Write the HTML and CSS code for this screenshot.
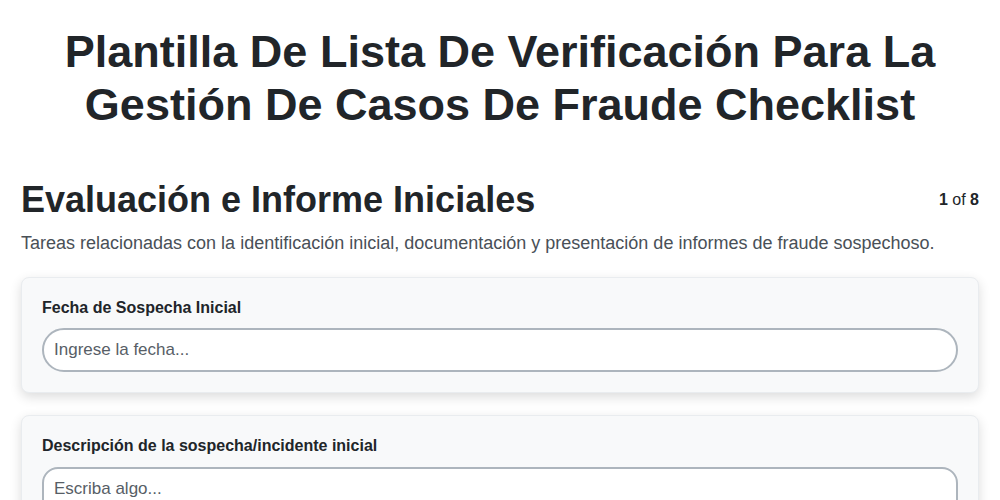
FILE: index.html
```html
<!DOCTYPE html>
<html lang="es">
<head>
<meta charset="utf-8">
<title>Plantilla De Lista De Verificación</title>
<link rel="stylesheet" href="styles.css">
</head>
<body>
<main class="page">
  <h1 class="title">Plantilla De Lista De Verificación Para La Gestión De Casos De Fraude Checklist</h1>
  <section class="section">
    <div class="section-head">
      <h2 class="section-title">Evaluación e Informe Iniciales</h2>
      <div class="pager"><b>1</b> of <b>8</b></div>
    </div>
    <p class="section-desc">Tareas relacionadas con la identificación inicial, documentación y presentación de informes de fraude sospechoso.</p>
    <div class="card">
      <label class="field-label" for="f1">Fecha de Sospecha Inicial</label>
      <input class="field-input" id="f1" type="text" placeholder="Ingrese la fecha...">
    </div>
    <div class="card">
      <label class="field-label" for="f2">Descripción de la sospecha/incidente inicial</label>
      <textarea class="field-area" id="f2" rows="4" placeholder="Escriba algo..."></textarea>
    </div>
  </section>
</main>
</body>
</html>
```
FILE: styles.css
```css
* { box-sizing: border-box; }
html, body { margin: 0; padding: 0; background: #ffffff; }
body {
  font-family: "Liberation Sans", Arial, sans-serif;
  color: #212529;
}
.page { padding: 0 21px; }
.title {
  margin: 25px 30px 0;
  font-size: 45px;
  line-height: 53px;
  font-weight: 700;
  text-align: center;
}
.section { margin-top: 47px; }
.section-head {
  display: flex;
  justify-content: space-between;
  align-items: center;
}
.section-title {
  margin: 0;
  font-size: 36px;
  line-height: 1.2;
  font-weight: 700;
}
.pager { font-size: 16px; line-height: 1.2; }
.pager b { font-weight: 700; }
.section-desc {
  margin: 9px 0 20px;
  font-size: 18px;
  line-height: 1.5;
  color: #495057;
}
.card {
  background: #f8f9fa;
  border: 1px solid #e9ecef;
  border-radius: 8px;
  padding: 20px;
  margin-bottom: 22px;
  box-shadow: 0 4px 12px rgba(0, 0, 0, 0.14);
  display: flex;
  flex-direction: column;
}
.field-label {
  font-size: 16px;
  line-height: 1.2;
  font-weight: 700;
  margin-bottom: 11px;
}
.field-input, .field-area {
  font-family: "Liberation Sans", Arial, sans-serif;
  font-size: 17px;
  line-height: 20px;
  color: #212529;
  background: #ffffff;
  border: 2px solid #adb5bd;
  padding: 10px;
  width: 100%;
  outline: none;
}
.field-input { border-radius: 22px; height: 44px; }
.field-area { border-radius: 16px; resize: vertical; display: block; }
.field-input::placeholder, .field-area::placeholder { color: #575e66; }
```
